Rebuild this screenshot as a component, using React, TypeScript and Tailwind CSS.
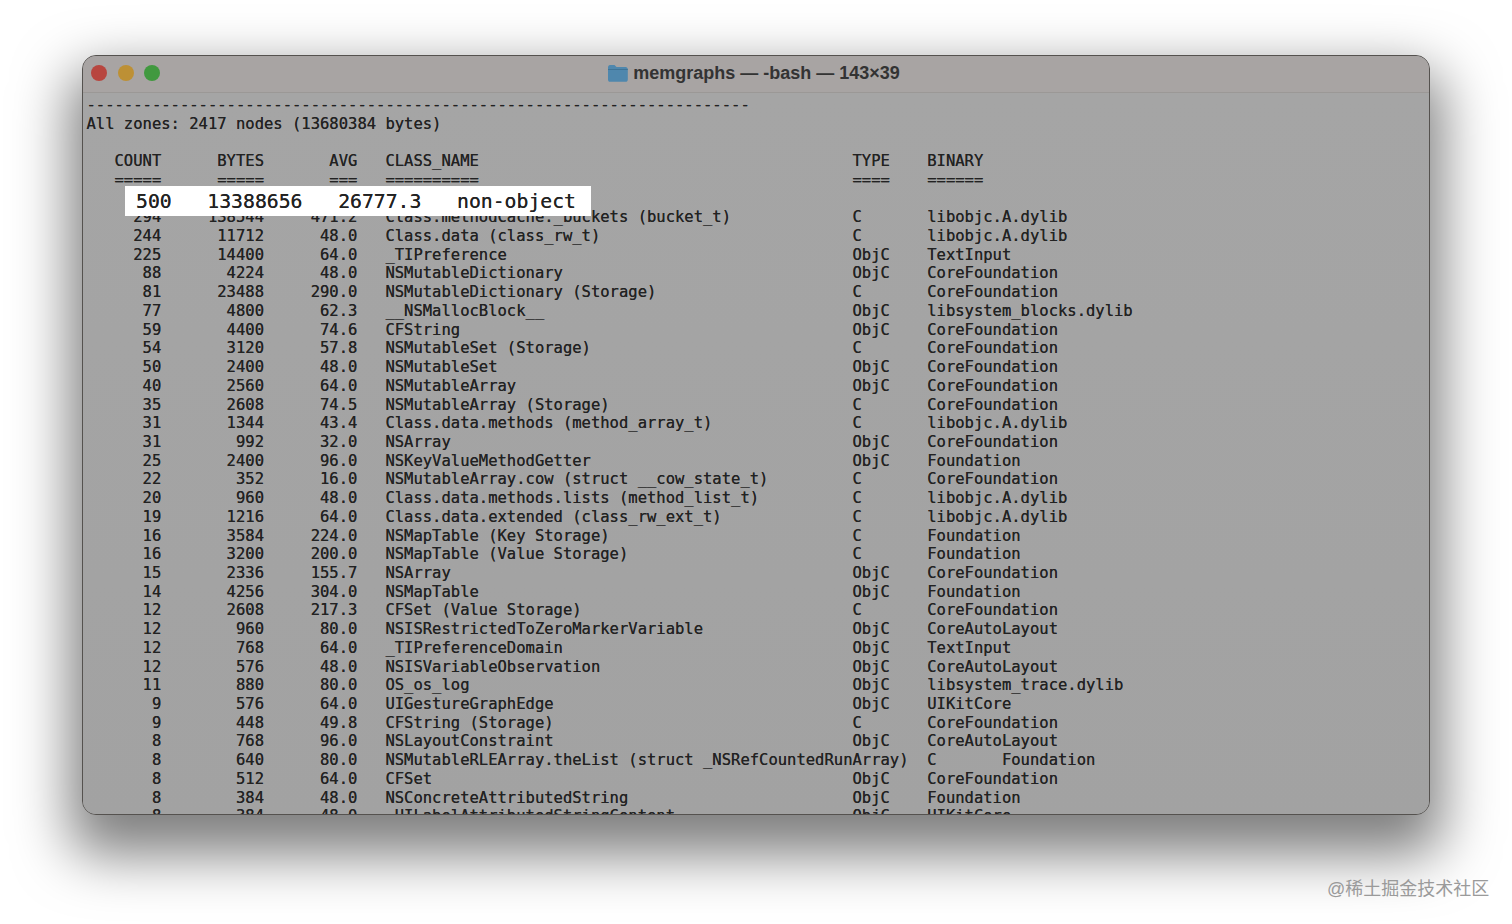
const rows: [number, number, string, string, string, string][] = [
  [294, 138544, "471.2", "Class.methodCache._buckets (bucket_t)", "C", "libobjc.A.dylib"],
  [244, 11712, "48.0", "Class.data (class_rw_t)", "C", "libobjc.A.dylib"],
  [225, 14400, "64.0", "_TIPreference", "ObjC", "TextInput"],
  [88, 4224, "48.0", "NSMutableDictionary", "ObjC", "CoreFoundation"],
  [81, 23488, "290.0", "NSMutableDictionary (Storage)", "C", "CoreFoundation"],
  [77, 4800, "62.3", "__NSMallocBlock__", "ObjC", "libsystem_blocks.dylib"],
  [59, 4400, "74.6", "CFString", "ObjC", "CoreFoundation"],
  [54, 3120, "57.8", "NSMutableSet (Storage)", "C", "CoreFoundation"],
  [50, 2400, "48.0", "NSMutableSet", "ObjC", "CoreFoundation"],
  [40, 2560, "64.0", "NSMutableArray", "ObjC", "CoreFoundation"],
  [35, 2608, "74.5", "NSMutableArray (Storage)", "C", "CoreFoundation"],
  [31, 1344, "43.4", "Class.data.methods (method_array_t)", "C", "libobjc.A.dylib"],
  [31, 992, "32.0", "NSArray", "ObjC", "CoreFoundation"],
  [25, 2400, "96.0", "NSKeyValueMethodGetter", "ObjC", "Foundation"],
  [22, 352, "16.0", "NSMutableArray.cow (struct __cow_state_t)", "C", "CoreFoundation"],
  [20, 960, "48.0", "Class.data.methods.lists (method_list_t)", "C", "libobjc.A.dylib"],
  [19, 1216, "64.0", "Class.data.extended (class_rw_ext_t)", "C", "libobjc.A.dylib"],
  [16, 3584, "224.0", "NSMapTable (Key Storage)", "C", "Foundation"],
  [16, 3200, "200.0", "NSMapTable (Value Storage)", "C", "Foundation"],
  [15, 2336, "155.7", "NSArray", "ObjC", "CoreFoundation"],
  [14, 4256, "304.0", "NSMapTable", "ObjC", "Foundation"],
  [12, 2608, "217.3", "CFSet (Value Storage)", "C", "CoreFoundation"],
  [12, 960, "80.0", "NSISRestrictedToZeroMarkerVariable", "ObjC", "CoreAutoLayout"],
  [12, 768, "64.0", "_TIPreferenceDomain", "ObjC", "TextInput"],
  [12, 576, "48.0", "NSISVariableObservation", "ObjC", "CoreAutoLayout"],
  [11, 880, "80.0", "OS_os_log", "ObjC", "libsystem_trace.dylib"],
  [9, 576, "64.0", "UIGestureGraphEdge", "ObjC", "UIKitCore"],
  [9, 448, "49.8", "CFString (Storage)", "C", "CoreFoundation"],
  [8, 768, "96.0", "NSLayoutConstraint", "ObjC", "CoreAutoLayout"],
  [8, 640, "80.0", "NSMutableRLEArray.theList (struct _NSRefCountedRunArray)", "C       Foundation", ""],
  [8, 512, "64.0", "CFSet", "ObjC", "CoreFoundation"],
  [8, 384, "48.0", "NSConcreteAttributedString", "ObjC", "Foundation"],
  [8, 384, "48.0", "_UILabelAttributedStringContent", "ObjC", "UIKitCore"],
];

function line(count: string, bytes: string, avg: string, name: string, type: string, binary: string) {
  const head = count.padStart(8) + bytes.padStart(11) + avg.padStart(10) + "   ";
  if (type.startsWith("C ")) return head + name.padEnd(58) + type;
  return head + name.padEnd(50) + type.padEnd(8) + binary;
}

const lines = [
  "-".repeat(71),
  "All zones: 2417 nodes (13680384 bytes)",
  " ",
  line("COUNT", "BYTES", "AVG", "CLASS_NAME", "TYPE", "BINARY"),
  line("=====", "=====", "===", "==========", "====", "======"),
  line("500", "13388656", "26777.3", "non-object", "", ""),
  ...rows.map((r) => line(String(r[0]), String(r[1]), r[2], r[3], r[4], r[5])),
];

export default function App() {
  return (
    <div className="relative h-[924px] w-[1512px] overflow-hidden bg-white pl-[82px] pt-[55px]">
      {/* window */}
      <div className="flex h-[760px] w-[1348px] flex-col overflow-hidden rounded-[14px] border border-[#55524f] bg-[#a3a3a3] shadow-[0_28px_55px_12px_rgba(0,0,0,0.5)]">
        {/* title bar */}
        <div className="relative flex h-[37px] shrink-0 items-center justify-center border-b border-[#9b9896] bg-[#a8a4a3]">
          <div className="absolute left-[8px] top-[9px] flex gap-[10.500px]">
            <span className="h-4 w-4 rounded-full bg-[#b8463f]" />
            <span className="h-4 w-4 rounded-full bg-[#bd9035]" />
            <span className="h-4 w-4 rounded-full bg-[#41993f]" />
          </div>
          <div className="ml-[-5px] mt-[-2px] flex items-center gap-[5px]">
            <svg width="21" height="18" viewBox="0 0 21 18">
              <path d="M1 3.500C1 2 1.800 1 3 1h4.500l2 2H18.500C20 3 20.800 4 20.800 5.500V15.500C20.800 17 20 17.800 18.500 17.800H3C1.800 17.800 1 17 1 15.500Z" fill="#4f87ad" />
              <rect x="1" y="5" width="19.800" height="1" fill="#3f7396" />
            </svg>
            <span className="font-['Liberation_Sans',sans-serif] text-[18px] font-bold leading-none text-[#333333]">
              memgraphs — -bash — 143×39
            </span>
          </div>
        </div>
        {/* terminal */}
        <div className="relative min-h-0 flex-1 overflow-hidden bg-gradient-to-b from-[#a5a5a5] to-[#a2a2a2] pl-[3.500px] pt-[3px] font-['DejaVu_Sans_Mono',monospace] text-[15.530px] leading-[18.730px] text-[#222222] [text-shadow:0_0_0.6px_#333333]">
          {lines.map((text, i) => (
            <div key={i} className="h-[18.730px] whitespace-pre">
              {text}
            </div>
          ))}
          {/* pasted highlight row */}
          <div className="absolute left-[42px] top-[93px] flex h-[30px] w-[466px] items-center whitespace-pre bg-white pl-[11px] pt-[1px] font-['DejaVu_Sans_Mono',monospace] text-[19.750px] leading-none text-[#222222]">
            {"500   13388656   26777.3   non-object"}
          </div>
        </div>
      </div>
      <div className="absolute left-[1327px] top-[878px] font-['Liberation_Sans','Noto_Sans_CJK_SC',sans-serif] text-[18px] leading-[22px] text-[#9a9a9a]">
        @稀土掘金技术社区
      </div>
    </div>
  );
}
